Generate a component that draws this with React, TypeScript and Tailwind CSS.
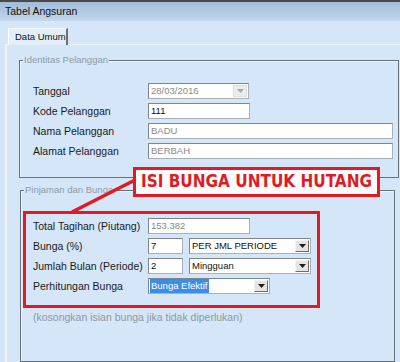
import React from 'react';

const red = 'border-[#e01b24]';

function Arrow({ disabled }: { disabled?: boolean }) {
  return (
    <div
      className={`flex h-full w-[14px] shrink-0 items-center justify-center border-l border-t border-r border-b ${
        disabled
          ? 'border-[#dcdcdc] bg-[#ececec]'
          : 'border-l-[#f4f4f4] border-t-[#f4f4f4] border-r-[#6e6e6e] border-b-[#6e6e6e] bg-[#e4e4e4]'
      }`}
    >
      <svg width="7" height="4" viewBox="0 0 7 4">
        <path d="M0 0h7L3.5 4z" fill={disabled ? '#a7a7a7' : '#1e1e1e'} />
      </svg>
    </div>
  );
}

function Field({
  width,
  value,
  muted,
}: {
  width: string;
  value: string;
  muted?: boolean;
}) {
  return (
    <div
      className={`${width} flex h-[16px] items-center border border-t-[#7d858d] border-l-[#7d858d] border-r-[#a9b0b7] border-b-[#a9b0b7] bg-white pl-[2px] text-[9.5px] ${
        muted ? 'text-[#8a8a8a]' : 'text-[#111]'
      }`}
    >
      {value}
    </div>
  );
}

function Select({
  width,
  value,
  selected,
  disabled,
}: {
  width: string;
  value: string;
  selected?: boolean;
  disabled?: boolean;
}) {
  return (
    <div
      className={`${width} flex h-[16px] items-center border border-t-[#7d858d] border-l-[#7d858d] border-r-[#a9b0b7] border-b-[#a9b0b7] bg-white p-[1px] text-[9.5px]`}
    >
      <div className="flex min-w-0 flex-1 items-center">
        <span
          className={
            selected
              ? 'bg-[#3a8ee6] px-[1px] text-white'
              : disabled
                ? 'pl-[1px] text-[#8a8a8a]'
                : 'pl-[1px] text-[#111]'
          }
        >
          {value}
        </span>
      </div>
      <Arrow disabled={disabled} />
    </div>
  );
}

function Row({ label, children }: { label: string; children: React.ReactNode }) {
  return (
    <div className="flex h-[16px] items-center">
      <div className="w-[115px] shrink-0 text-[10.5px] leading-none text-[#1a1a1a]">{label}</div>
      <div className="flex items-center gap-[6px]">{children}</div>
    </div>
  );
}

function GroupLabel({ text }: { text: string }) {
  return (
    <div className="-mt-[7px] ml-[3px] w-fit bg-[#d5e6f9] px-[1px] text-[9.5px] leading-[12px] text-[#8e9aa6]">
      {text}
    </div>
  );
}

export default function App() {
  return (
    <div className="relative h-[362px] w-[400px] overflow-hidden bg-[#d5e6f9] font-['Liberation_Sans',Arial,sans-serif]">
      {/* title bar */}
      <div className="flex h-[21px] items-center border-t-2 border-[#4a4a4a] bg-gradient-to-b from-[#a2bcd7] to-[#c3d7ed] pl-[5px] text-[10.5px] text-[#111]">
        Tabel Angsuran
      </div>

      {/* tab strip */}
      <div className="flex h-[23px] items-end pl-[8px]">
        <div className="-mb-px flex h-[17px] w-[60px] items-center whitespace-nowrap border-l border-t border-r-2 border-l-white border-t-[#f4f8fc] border-r-[#6c7178] bg-[#e2eefa] pl-[6px] text-[9.5px] text-[#111]">
          Data Umum
        </div>
      </div>

      {/* tab panel */}
      <div className="ml-[5px] h-[318px] border-l-2 border-t border-l-[#eef5fd] border-t-[#eef5fd] pl-[12px] pt-[15px]">
        <div className="h-[118px] w-[380px] border border-[#66717c] shadow-[inset_1px_1px_0_#eef5fd]">
          <GroupLabel text="Identitas Pelanggan" />
          <div className="mt-[17px] flex flex-col gap-[4px] pl-[13px]">
            <Row label="Tanggal">
              <Select width="w-[101px]" value="28/03/2016" disabled />
            </Row>
            <Row label="Kode Pelanggan">
              <Field width="w-[102px]" value="111" />
            </Row>
            <Row label="Nama Pelanggan">
              <Field width="w-[245px]" value="BADU" muted />
            </Row>
            <Row label="Alamat Pelanggan">
              <Field width="w-[245px]" value="BERBAH" muted />
            </Row>
          </div>
        </div>

        <div className="ml-[1px] mt-[12px] h-[172px] w-[375px] border border-[#66717c] shadow-[inset_1px_1px_0_#eef5fd]">
          <GroupLabel text="Pinjaman dan Bunga" />
          <div className={`ml-[2px] mt-[15px] w-[297px] border-[3px] ${red} pb-[11px] pl-[7px] pt-[4px]`}>
            <div className="flex flex-col gap-[4px]">
              <Row label="Total Tagihan (Piutang)">
                <Field width="w-[102px]" value="153.382" muted />
              </Row>
              <Row label="Bunga (%)">
                <Field width="w-[35px]" value="7" />
                <Select width="w-[122px]" value="PER JML PERIODE" />
              </Row>
              <Row label="Jumlah Bulan (Periode)">
                <Field width="w-[35px]" value="2" />
                <Select width="w-[122px]" value="Mingguan" />
              </Row>
              <Row label="Perhitungan Bunga">
                <Select width="w-[122px]" value="Bunga Efektif" selected />
              </Row>
            </div>
          </div>
          <div className="mt-[2px] pl-[12px] text-[10.5px] text-[#8c98a5]">
            (kosongkan isian bunga jika tidak diperlukan)
          </div>
        </div>
      </div>

      {/* annotation overlay */}
      <svg className="pointer-events-none absolute left-0 top-0" width="400" height="362">
        <line x1="137" y1="179" x2="72" y2="212" stroke="#e01b24" strokeWidth="3.5" />
      </svg>
      <div
        className={`absolute left-[133px] top-[167px] flex h-[30px] w-[247px] items-center justify-center whitespace-nowrap border-[3px] ${red} bg-white font-['DejaVu_Sans_Condensed','DejaVu_Sans',sans-serif] text-[17px] font-bold text-[#e01b24]`}
      >
        ISI BUNGA UNTUK HUTANG
      </div>
    </div>
  );
}
